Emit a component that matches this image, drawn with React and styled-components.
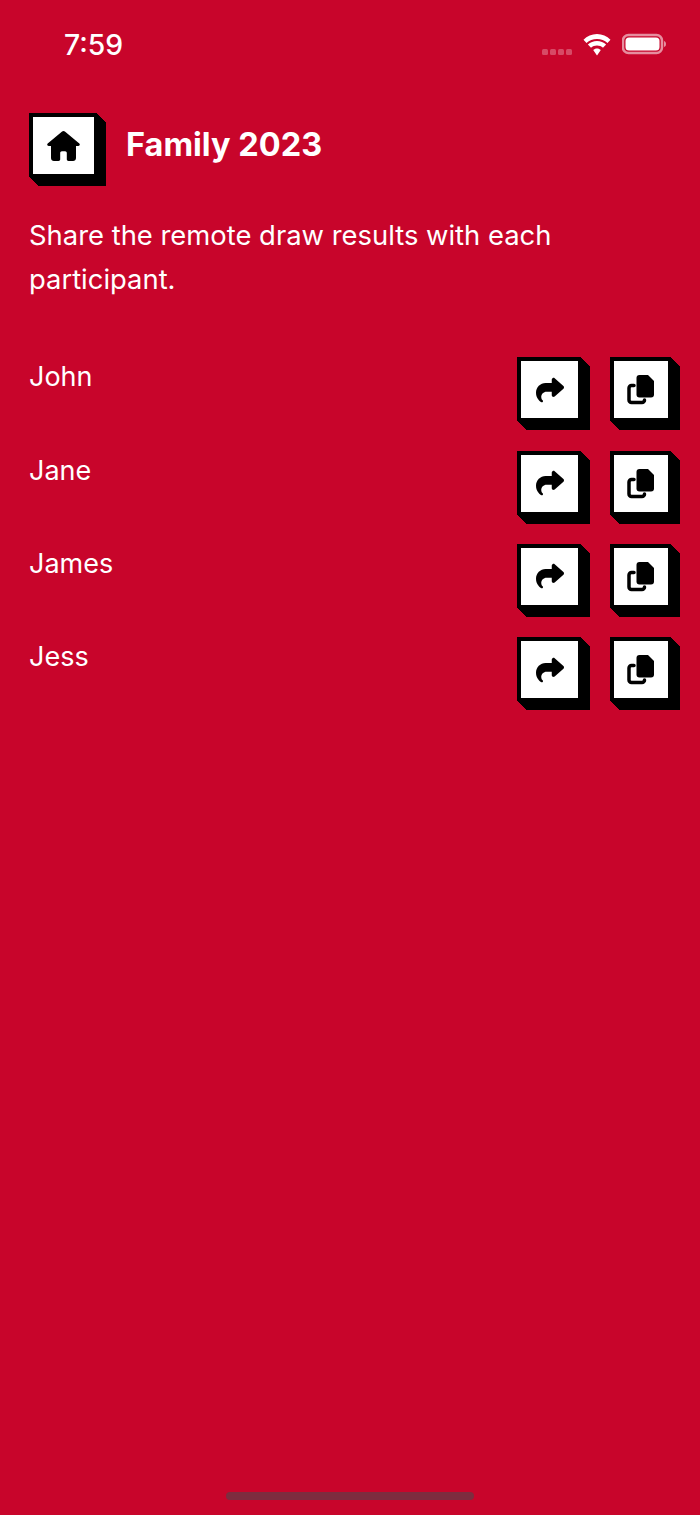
import React from 'react';
import styled, { createGlobalStyle } from 'styled-components';
import { FaShare } from 'react-icons/fa6';

const RED = '#c8052b';

const extrude = Array.from({ length: 9 }, (_, i) => `${i + 1}px ${i + 1}px 0 #000`).join(', ');

const GlobalStyle = createGlobalStyle`
  html, body {
    margin: 0;
    padding: 0;
    background: ${RED};
  }
  body {
    font-family: Inter, "Liberation Sans", sans-serif;
    color: #fff;
  }
`;

const Screen = styled.div`
  position: relative;
  height: 1515px;
  overflow: hidden;
  background: ${RED};
  box-sizing: border-box;
`;

const StatusBar = styled.div`
  height: 88px;
  display: flex;
  align-items: center;
  justify-content: space-between;
  padding: 2px 33px 0 64px;
  box-sizing: border-box;
`;

const Time = styled.span`
  font-size: 28.3px;
  font-weight: 500;
  line-height: 88px;
`;

const StatusIcons = styled.div`
  display: flex;
  align-items: center;
  gap: 10px;
`;

const Signal = styled.div`
  display: flex;
  gap: 2px;
  margin: 14px 0 0 0;
`;

const SignalDot = styled.i`
  display: block;
  width: 6px;
  height: 6px;
  border-radius: 1.5px;
  background: rgba(255, 255, 255, 0.28);
`;

const Content = styled.main`
  padding: 25px 20px 0 29px;
`;

const Header = styled.header`
  display: flex;
  align-items: flex-start;
  gap: 29px;
  height: 101px;
`;

const Title = styled.h1`
  margin: 0;
  font-size: 32.5px;
  font-weight: 700;
  line-height: 64px;
`;

const IconButton = styled.button`
  flex: none;
  width: ${(p) => p.$w}px;
  height: 64px;
  padding: 0;
  display: flex;
  align-items: center;
  justify-content: center;
  background: #fff;
  color: #000;
  border-style: solid;
  border-color: #000;
  border-width: 4px 3px 3px 4px;
  border-radius: 0;
  box-shadow: ${extrude};
  font-size: ${(p) => p.$size}px;
`;

const Intro = styled.p`
  margin: 0;
  font-size: 27.4px;
  line-height: 43.5px;
  width: 560px;
`;

const List = styled.div`
  margin-top: 56.3px;
  display: flex;
  flex-direction: column;
  gap: 29.3px;
`;

const Row = styled.div`
  display: flex;
  align-items: flex-start;
  height: 64px;
`;

const Name = styled.span`
  flex: 1;
  font-size: 27px;
  line-height: 39.5px;
`;

const Actions = styled.div`
  display: flex;
  margin-right: 9px;
  gap: 29px;
`;

const HomeBar = styled.div`
  position: absolute;
  left: 226px;
  bottom: 15px;
  width: 248px;
  height: 8px;
  border-radius: 4px;
  background: #7d2c3f;
`;

const people = ['John', 'Jane', 'James', 'Jess'];

const Wifi = () => (
  <svg width="30" height="22" viewBox="0 0 30 22" fill="#fff">
    <path d="M15 5c4 0 7.700 1.500 10.500 4l3-3.300C24.900 2.200 20.200 0 15 0S5.100 2.200 1.500 5.700l3 3.300C7.300 6.500 11 5 15 5z" />
    <path d="M15 11.500c2.300 0 4.400.9 6 2.300l3.100-3.300C21.700 8.300 18.500 7 15 7s-6.700 1.300-9.100 3.500L9 13.800c1.600-1.400 3.700-2.300 6-2.300z" />
    <path d="M15 14.500c-1.500 0-2.800.6-3.800 1.500L15 21.500l3.800-5.500c-1-.9-2.300-1.500-3.800-1.500z" />
  </svg>
);

const Battery = () => (
  <svg width="45" height="24" viewBox="0 0 45 24">
    <rect x="1" y="2" width="39" height="18" rx="5.500" fill="none" stroke="#fff" strokeOpacity="0.55" strokeWidth="2.500" />
    <rect x="3.500" y="4.500" width="34" height="13" rx="3.500" fill="#fff" />
    <path d="M42 8c1.500.5 2 1.500 2 3s-.5 2.500-2 3z" fill="#fff" fillOpacity="0.55" />
  </svg>
);

const HomeIcon = () => (
  <svg width="33" height="30" viewBox="0 0 33 30" fill="#000">
    <path d="M15.100 .6 .7 12.400c-1 .9-.4 2.600 1 2.600H4v12c0 1.700 1.300 3 3 3h4.500c1 0 1.700-.8 1.700-1.700V22c0-1 .7-1.700 1.700-1.700h3.200c1 0 1.700.7 1.700 1.700v6.300c0 .9.700 1.700 1.700 1.700H26c1.700 0 3-1.300 3-3V15h2.300c1.400 0 2-1.700 1-2.600L17.900.6c-.8-.7-2-.7-2.800 0z" />
  </svg>
);

const CopyIcon = () => (
  <svg width="28" height="31" viewBox="0 0 28 31">
    <path d="M12.500 1h8.500l6 6v13.500a3 3 0 0 1-3 3H12.500a3 3 0 0 1-3-3V4a3 3 0 0 1 3-3z" fill="#000" />
    <path d="M7 11.500H4.500a2.500 2.500 0 0 0-2.500 2.500v12a2.500 2.500 0 0 0 2.500 2.500H15a2.500 2.500 0 0 0 2.500-2.500" fill="none" stroke="#000" strokeWidth="3.500" strokeLinecap="round" />
  </svg>
);

export default function App() {
  return (
    <Screen>
      <GlobalStyle />
      <StatusBar>
        <Time>7:59</Time>
        <StatusIcons>
          <Signal>
            {[0, 1, 2, 3].map((i) => <SignalDot key={i} />)}
          </Signal>
          <Wifi />
          <Battery />
        </StatusIcons>
      </StatusBar>
      <Content>
        <Header>
          <IconButton $w={68}><HomeIcon /></IconButton>
          <Title>Family 2023</Title>
        </Header>
        <Intro>Share the remote draw results with each participant.</Intro>
        <List>
          {people.map((name) => (
            <Row key={name}>
              <Name>{name}</Name>
              <Actions>
                <IconButton $w={64} $size={28}><FaShare /></IconButton>
                <IconButton $w={61}><CopyIcon /></IconButton>
              </Actions>
            </Row>
          ))}
        </List>
      </Content>
      <HomeBar />
    </Screen>
  );
}
